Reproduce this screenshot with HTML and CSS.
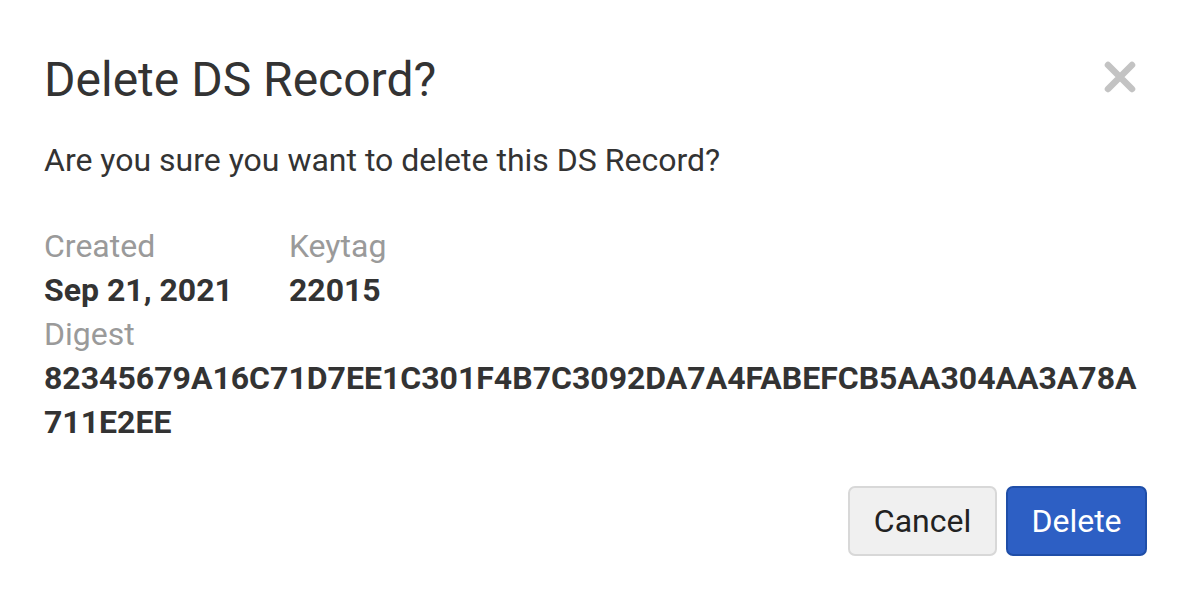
FILE: index.html
```html
<!DOCTYPE html>
<html>
<head>
<meta charset="utf-8">
<link rel="stylesheet" href="styles.css">
</head>
<body>
<div class="modal">
  <div class="header">
    <h1 class="title">Delete DS Record?</h1>
    <button class="close" aria-label="Close">
      <svg width="34" height="34" viewBox="0 0 34 34"><path d="M5 5 L29 29 M29 5 L5 29" stroke="#c3c3c3" stroke-width="6.5" stroke-linecap="round"/></svg>
    </button>
  </div>
  <p class="question">Are you sure you want to delete this DS Record?</p>
  <div class="details">
    <div class="row">
      <div class="field">
        <div class="label">Created</div>
        <div class="value">Sep 21, 2021</div>
      </div>
      <div class="field">
        <div class="label">Keytag</div>
        <div class="value">22015</div>
      </div>
    </div>
    <div class="field">
      <div class="label">Digest</div>
      <div class="value digest">82345679A16C71D7EE1C301F4B7C3092DA7A4FABEFCB5AA304AA3A78A711E2EE</div>
    </div>
  </div>
  <div class="footer">
    <button class="btn btn-cancel">Cancel</button>
    <button class="btn btn-delete">Delete</button>
  </div>
</div>
</body>
</html>
```

FILE: styles.css
```css
* { box-sizing: border-box; }
html, body { margin: 0; padding: 0; background: #fff; }
body { font-family: Roboto, "Noto Sans", sans-serif; color: #333; }
.modal { width: 1188px; height: 598px; padding: 52px 41px 0 44px; }
.header { display: flex; justify-content: space-between; align-items: flex-start; }
.title { margin: 0; font-size: 48px; font-weight: 400; line-height: 56px; color: #333; }
.close { background: none; border: 0; padding: 0; margin: 8px 10px 0 0; width: 34px; height: 34px; cursor: pointer; }
.close svg { display: block; }
.question { margin: 30px 0 0; font-size: 32px; line-height: 44px; }
.details { margin-top: 42px; font-size: 32px; line-height: 44px; }
.row { display: flex; gap: 56px; }
.label { color: #9a9a9a; }
.value { font-weight: 700; }
.digest { word-break: break-all; }
.footer { display: flex; justify-content: flex-end; gap: 9px; margin-top: 42px; }
.btn { font-family: inherit; font-size: 32px; height: 70px; border-radius: 7px; padding: 0; border: 2px solid; }
.btn-cancel { background: #f0f0f0; border-color: #d8d8d8; color: #222; width: 149px; }
.btn-delete { background: #2d5fc4; border-color: #1f4ea8; color: #fff; width: 141px; }
```
